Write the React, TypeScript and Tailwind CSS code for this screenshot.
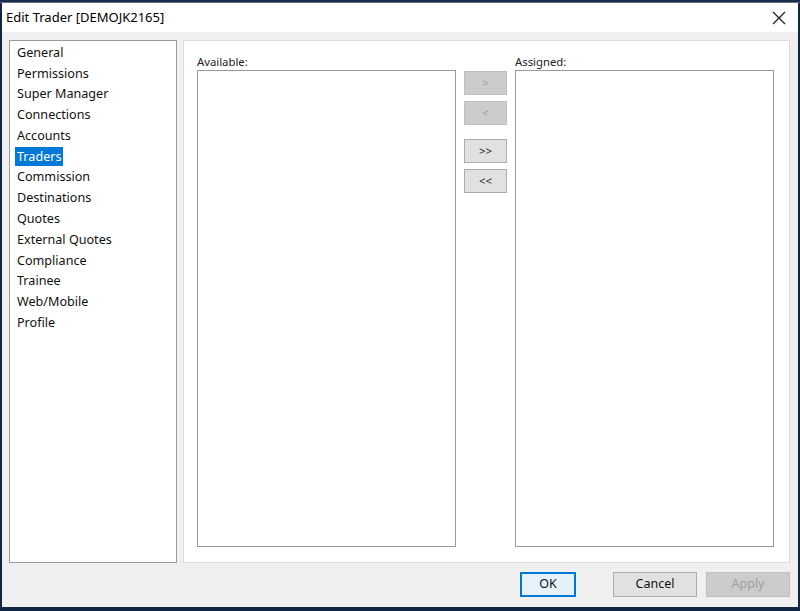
import React from 'react';

const pages = [
  'General',
  'Permissions',
  'Super Manager',
  'Connections',
  'Accounts',
  'Traders',
  'Commission',
  'Destinations',
  'Quotes',
  'External Quotes',
  'Compliance',
  'Trainee',
  'Web/Mobile',
  'Profile',
];

const font = { fontFamily: '"Noto Sans", "Open Sans", sans-serif' };

function MoveButton({ label, disabled }: { label: string; disabled?: boolean }) {
  return (
    <button
      className={
        disabled
          ? 'w-[43px] h-[24px] bg-[#cccccc] border border-[#bfbfbf] text-[#a0a0a0] text-[11.5px] leading-none'
          : 'w-[43px] h-[24px] bg-[#e1e1e1] border border-[#adadad] text-[#222] text-[11.5px] leading-none'
      }
    >
      {label}
    </button>
  );
}

export default function App() {
  return (
    <div className="w-[800px] h-[611px] flex flex-col bg-[#122544] overflow-hidden" style={font}>
      {/* top edge of window behind */}
      <div className="h-[3px] bg-[#1b2d4f] border-b border-[#5a6a86]" />

      <div className="flex-1 flex flex-col ml-[2px] mr-[2px] mb-[4px] bg-[#f0f0f0]">
        {/* title bar */}
        <div className="h-[29px] bg-white flex items-center justify-between pl-[4px] pr-[12px]">
          <span className="text-[13px] text-black">Edit Trader [DEMOJK2165]</span>
          <svg width="14" height="14" viewBox="0 0 14 14" className="text-[#222]">
            <path d="M1 1 L13 13 M13 1 L1 13" stroke="currentColor" strokeWidth="1.3" />
          </svg>
        </div>

        {/* content */}
        <div className="flex-1 flex gap-[6px] pl-[7px] pr-[8px] pt-[8px]">
          <div className="w-[168px] h-[523px] bg-white border border-[#9a9a9a] pt-[1px] pl-[5px]">
            {pages.map((p) => (
              <div key={p} className="h-[20.77px] flex items-center">
                <span
                  className={
                    p === 'Traders'
                      ? 'bg-[#0078d7] text-white text-[12.6px] px-[2px] leading-[19px]'
                      : 'text-[#111] text-[12.6px] px-[2px] leading-[19px]'
                  }
                >
                  {p}
                </span>
              </div>
            ))}
          </div>

          <div className="flex-1 h-[523px] bg-white border border-[#dcdcdc] flex pl-[13px] pt-[12px] gap-[8px]">
            <div className="flex flex-col">
              <div className="text-[11.3px] text-[#222] leading-[17px]">Available:</div>
              <div className="w-[259px] h-[477px] border border-[#9a9a9a] bg-white" />
            </div>
            <div className="flex flex-col pt-[18px]">
              <MoveButton label=">" disabled />
              <div className="h-[6px]" />
              <MoveButton label="<" disabled />
              <div className="h-[14px]" />
              <MoveButton label=">>" />
              <div className="h-[6px]" />
              <MoveButton label="<<" />
            </div>
            <div className="flex flex-col">
              <div className="text-[11.3px] text-[#222] leading-[17px]">Assigned:</div>
              <div className="w-[259px] h-[477px] border border-[#9a9a9a] bg-white" />
            </div>
          </div>
        </div>

        {/* footer buttons */}
        <div className="h-[44px] flex items-start justify-end pr-[8px] pt-[9px]">
          <button className="w-[56px] h-[25px] bg-[#e5f1fb] border-2 border-[#0078d7] text-[12.5px] text-[#111] leading-none">
            OK
          </button>
          <button className="ml-[37px] w-[84px] h-[25px] bg-[#e1e1e1] border border-[#adadad] text-[12.5px] text-[#111] leading-none">
            Cancel
          </button>
          <button className="ml-[9px] w-[84px] h-[25px] bg-[#cccccc] border border-[#bfbfbf] text-[12.5px] text-[#a0a0a0] leading-none">
            Apply
          </button>
        </div>
      </div>
    </div>
  );
}
